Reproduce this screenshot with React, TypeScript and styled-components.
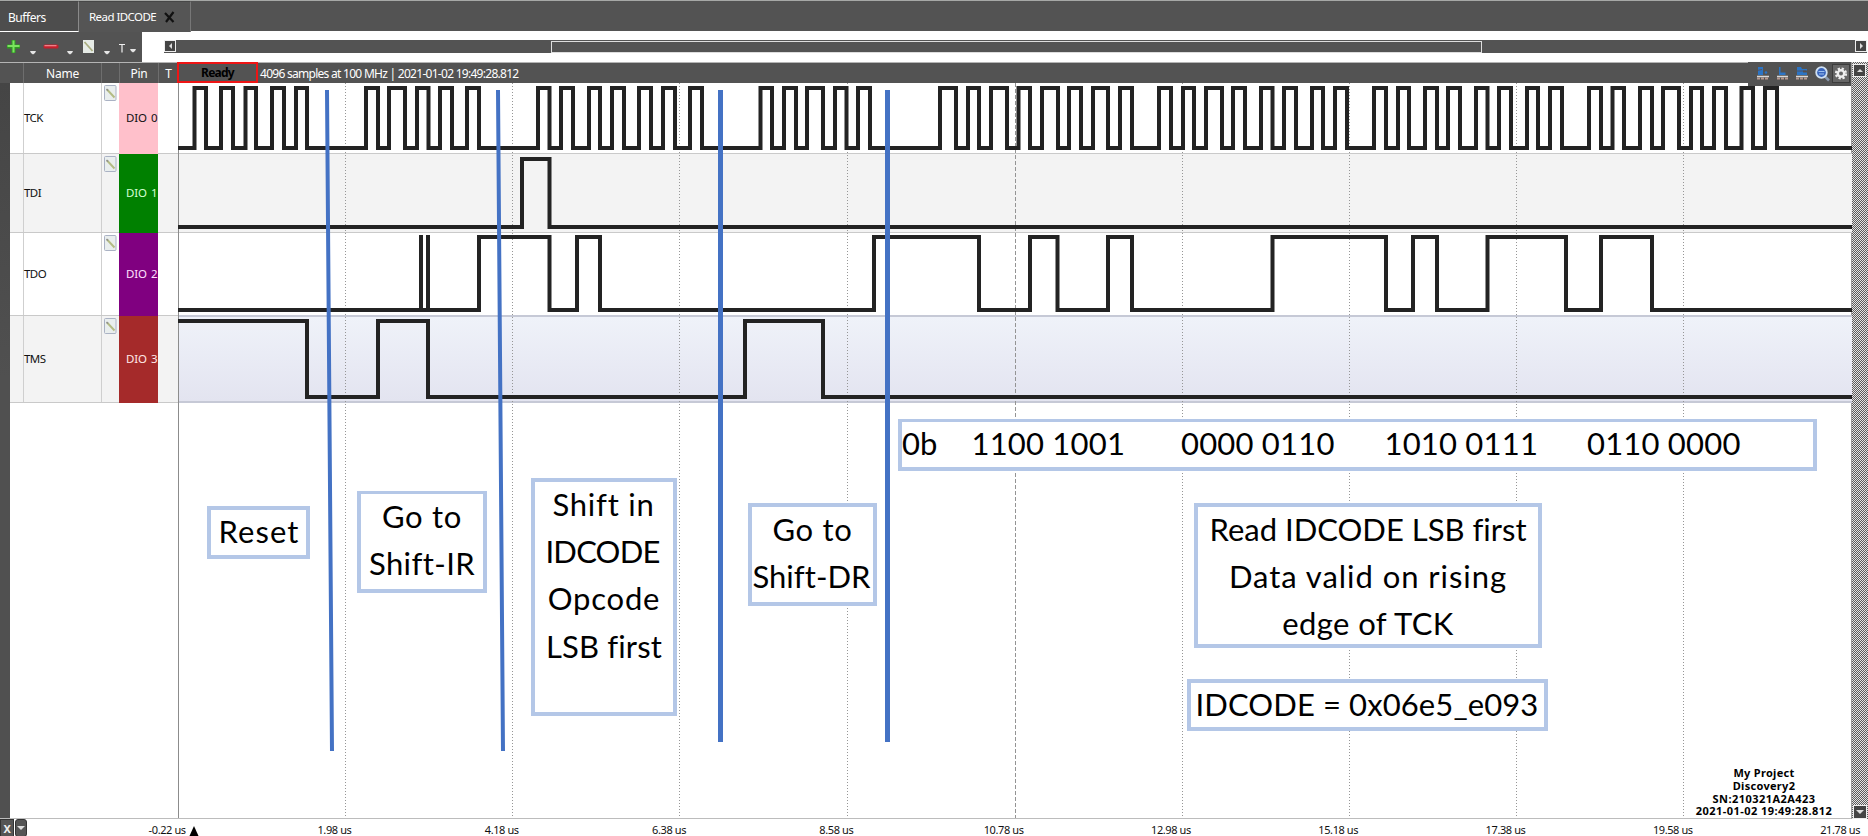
import React from 'react';
import styled, { createGlobalStyle, css } from 'styled-components';

const GlobalStyle = createGlobalStyle`
  * { box-sizing: border-box; }
  body { margin: 0; background: #fff; font-family: 'Noto Sans', sans-serif; overflow: hidden; }
`;

const dark = '#535353';

const Window = styled.div`
  width: 1868px;
  height: 836px;
  display: flex;
  flex-direction: column;
  overflow: hidden;
  background: #fff;
`;

const TabBar = styled.div`
  height: 32px;
  flex: none;
  display: flex;
  background: ${dark};
  border-top: 1px solid #a6a8a6;
  color: #fff;
  font-size: 12px;
`;

const Tab = styled.div<{ $width: number; $active?: boolean }>`
  width: ${p => p.$width}px;
  display: flex;
  align-items: center;
  gap: 8px;
  padding: ${p => (p.$active ? '0 0 1px 10px' : '2px 0 0 8px')};
  font-size: ${p => (p.$active ? '11.5px' : '12px')};
  letter-spacing: ${p => (p.$active ? '-0.55px' : '-0.45px')};
  white-space: nowrap;
  border-right: 1px solid ${p => (p.$active ? '#777' : '#8a8a8a')};
  border-top: 1px solid #474747;
  border-bottom: ${p => (p.$active ? 'none' : '1px solid #fff')};
  background: ${p => (p.$active ? '#555' : '#4d4d4d')};
`;

const TabRest = styled.div`
  flex: 1;
  border-bottom: 1px solid #fff;
`;

const ToolRow = styled.div`
  height: 30px;
  flex: none;
  display: flex;
`;

const Tools = styled.div`
  width: 142px;
  background: ${dark};
  svg { display: block; }
`;

const ScrollArea = styled.div`
  flex: 1;
  padding: 8px 1px 0 22px;
`;

const HTrack = styled.div`
  height: 13px;
  display: flex;
  justify-content: space-between;
  background: ${dark};
`;

const ArrowButton = styled.div<{ $size?: number }>`
  width: ${p => p.$size ?? 12}px;
  height: ${p => p.$size ?? 12}px;
  flex: none;
  border: 1px solid #eee;
  background: #444;
  display: flex;
  align-items: center;
  justify-content: center;
`;

const Arrow = styled.i<{ $dir: 'left' | 'right' | 'up' | 'down' }>`
  width: 0;
  height: 0;
  border: 3px solid transparent;
  ${p => p.$dir === 'left' && css`border-right-color: #ddd; border-left: 0;`}
  ${p => p.$dir === 'right' && css`border-left-color: #ddd; border-right: 0;`}
  ${p => p.$dir === 'up' && css`border-bottom-color: #ddd; border-top: 0;`}
  ${p => p.$dir === 'down' && css`border: 4px solid transparent; border-top-color: #ddd; border-bottom: 0;`}
`;

const HThumb = styled.div`
  width: 931px;
  height: 12px;
  margin: 1px 0 0;
  border: 1px solid #ddd;
  background: ${dark};
`;

const Spacer = styled.div<{ $w: number }>`
  width: ${p => p.$w}px;
  flex: none;
`;

const Body = styled.div`
  height: 757px;
  flex: none;
  display: flex;
`;

const Main = styled.div`
  width: 1852px;
  display: flex;
  flex-direction: column;
  border-bottom: 1px solid #bcbcbc;
`;

const Header = styled.div`
  height: 21px;
  flex: none;
  display: flex;
  background: ${dark};
  border-top: 1px solid #b4b4b4;
  color: #fff;
  font-size: 12px;
  position: relative;
`;

const HeadCell = styled.div<{ $w: number }>`
  width: ${p => p.$w}px;
  flex: none;
  display: flex;
  align-items: center;
  justify-content: center;
  border-right: 1px solid #6e6e6e;
  letter-spacing: -0.2px;
  padding-top: 1px;
`;

const Ready = styled.div`
  width: 81px;
  height: 21px;
  margin: -1px 0 0 -2px;
  border: 2px solid #ee1515;
  color: #000;
  font-weight: 700;
  font-size: 12px;
  letter-spacing: -0.75px;
  display: flex;
  align-items: center;
  justify-content: center;
  position: relative;
`;

const Status = styled.div`
  padding: 1px 0 0 2px;
  display: flex;
  align-items: center;
  letter-spacing: -0.72px;
  white-space: nowrap;
`;

const CornerTools = styled.div`
  position: absolute;
  right: 0;
  top: -1px;
  width: 103px;
  height: 24px;
  background: ${dark};
  z-index: 4;
`;

const Content = styled.div`
  flex: 1;
  display: flex;
`;

const Gutter = styled.div`
  width: 10px;
  background: linear-gradient(#454545, #505050 40%, #505050);
`;

const Channels = styled.div`
  width: 168px;
`;

const rowHeights = [71, 79, 83, 87];

const ChannelRow = styled.div<{ $h: number; $alt?: boolean }>`
  height: ${p => p.$h}px;
  display: flex;
  font-size: 11.5px;
  background: ${p => (p.$alt ? '#f3f3f3' : '#fff')};
  border-bottom: 1px solid #c9c9c9;
`;

const Grip = styled.div`
  width: 14px;
  border-right: 1px solid #cfcfcf;
`;

const NameCell = styled.div`
  width: 78px;
  display: flex;
  align-items: center;
  padding-bottom: 1px;
  letter-spacing: -0.55px;
  color: #111;
  border-right: 1px solid #cfcfcf;
`;

const NoteCell = styled.div`
  width: 17px;
  padding: 2px 0 0 2px;
`;

const PinCell = styled.div<{ $bg: string; $fg: string }>`
  width: 38.5px;
  margin-bottom: -1px;
  background: ${p => p.$bg};
  color: ${p => p.$fg};
  display: flex;
  align-items: center;
  justify-content: space-between;
  padding: 0 0 2px 7px;
  overflow: hidden;
  letter-spacing: -0.1px;
`;

const Plot = styled.div`
  flex: 1;
  position: relative;
  > svg { position: absolute; left: 0; top: 0; display: block; }
`;

const Note = styled.div<{ $x: number; $y: number; $w: number; $h: number; $up?: number; $top?: number }>`
  position: absolute;
  left: ${p => p.$x - 178}px;
  top: ${p => p.$y - 83}px;
  width: ${p => p.$w}px;
  height: ${p => p.$h}px;
  border: 4px solid #b4c7e7;
  border-top-width: ${p => p.$top ?? 4}px;
  background: #fff;
  color: #000;
  font-family: Lato, 'Open Sans', sans-serif;
  font-size: 31px;
  font-variant-ligatures: none;
  line-height: 47.2px;
  display: flex;
  flex-direction: column;
  align-items: center;
  white-space: pre;
  > :first-child { margin-top: ${p => -(p.$up ?? 1)}px; }
`;

const Line = styled.span<{ $ls?: number; $dx?: number }>`
  flex: none;
  letter-spacing: ${p => p.$ls ?? 0}px;
  margin-left: ${p => p.$dx ?? 0}px;
`;

const Bits = styled.div`
  align-self: flex-start;
  display: grid;
  grid-template-columns: 69.5px 209.5px 203.5px 202.5px auto;
`;

const Project = styled.div`
  position: absolute;
  right: 12px;
  bottom: 0;
  width: 150px;
  background: #fff;
  text-align: center;
  white-space: nowrap;
  font-size: 11px;
  font-weight: 700;
  line-height: 12.7px;
  letter-spacing: 0.4px;
`;

const ProjectLine = styled.div<{ $ls?: number }>`
  letter-spacing: ${p => p.$ls ?? 0.3}px;
`;

const VScroll = styled.div`
  flex: 1;
  display: flex;
  flex-direction: column;
  justify-content: space-between;
  border-left: 1px solid #9c9c9c;
  padding: 2px 1px 0 1px;
  background: repeating-conic-gradient(#5c5c5c 0 25%, #e4e4e4 0 50%) 0 0 / 2px 2px;
`;

const Axis = styled.div`
  flex: 1;
  position: relative;
  display: flex;
  font-size: 11px;
  letter-spacing: -0.4px;
  color: #111;
`;

const AxisButtons = styled.div`
  width: 83.5px;
  flex: none;
  display: flex;
  gap: 1px;
  > span {
    width: 14px;
    background: #555;
    border: 1px solid #333;
    color: #eee;
    font-weight: 700;
    font-size: 11px;
    display: flex;
    justify-content: center;
    align-items: center;
  }
  > span + span { width: 12px; border-radius: 3px; }
`;

const Tick = styled.span`
  width: 167.3px;
  flex: none;
  text-align: center;
  padding-top: 3px;
`;

const Marker = styled.i`
  position: absolute;
  left: 189px;
  bottom: 0;
  border: 5px solid transparent;
  border-bottom: 11px solid #000;
  border-top: 0;
`;

const wave = (start: number, startHigh: boolean, hi: number, lo: number, edges: number[]) => {
  let high = startHigh;
  let d = `M${start - 178} ${(high ? hi : lo) - 83}`;
  edges.forEach(x => {
    d += `H${x - 178}`;
    high = !high;
    d += `V${(high ? hi : lo) - 83}`;
  });
  return d + 'H1674';
};

const tck = [
  194.5, 206, 221, 233, 245.5, 256, 272, 284, 296, 307, 366, 378, 389, 405, 417, 428.5, 440, 452, 467, 479,
  538, 549.5, 561, 573, 589, 600, 612, 624, 639, 651, 663, 675, 690, 702, 760.5, 772, 784, 796, 807, 823, 835,
  846.5, 858, 870, 940, 956, 968, 979, 991, 1007, 1018.5, 1030, 1042, 1058, 1069, 1081, 1093, 1108, 1120, 1132,
  1159, 1171, 1183, 1194, 1206, 1222, 1233, 1245, 1261, 1272.5, 1284, 1296, 1312, 1323, 1335, 1347, 1374, 1386,
  1398, 1409, 1425, 1437, 1448, 1460, 1476, 1487.5, 1499, 1511, 1527, 1538, 1550, 1562, 1589, 1601, 1612.5,
  1624, 1640, 1652, 1663, 1679, 1691, 1702, 1714, 1726, 1741.5, 1753, 1765, 1777,
];
const tdi = [522, 549.5];
const tdo = [479, 549.5, 577, 600, 874, 979, 1030, 1057.5, 1108, 1132, 1272.5, 1386, 1413, 1437, 1487.5, 1566, 1601, 1652];
const tms = [307, 378, 428, 745, 823];

const grid = [345.5, 512.5, 679.5, 847.5, 1182.5, 1349.5, 1516.5, 1683.5];

const channels = [
  { name: 'TCK', pin: '0', bg: '#ffc0cb', fg: '#111' },
  { name: 'TDI', pin: '1', bg: '#008000', fg: '#d4ffd4' },
  { name: 'TDO', pin: '2', bg: '#800080', fg: '#ffe0ff' },
  { name: 'TMS', pin: '3', bg: '#a52a2a', fg: '#ffe8e8' },
];

const ticks = ['-0.22 us', '1.98 us', '4.18 us', '6.38 us', '8.58 us', '10.78 us', '12.98 us', '15.18 us', '17.38 us', '19.58 us', '21.78 us'];

const NoteIcon = () => (
  <svg width="13" height="16" viewBox="0 0 13 16">
    <rect x="0.5" y="0.5" width="11.500" height="15" rx="1" fill="#e9eeee" stroke="#aab2c4" />
    <path d="M3 4.500L10.500 12.500" stroke="#b3bb84" strokeWidth="2" />
    <path d="M2.500 4l1.500 1.500" stroke="#8c8c8c" strokeWidth="1.500" />
  </svg>
);

const Toolbar = () => (
  <svg width="142" height="30">
    <path d="M13.5 8v13M7 14.5h13" stroke="#2f9a22" strokeWidth="4" />
    <path d="M13.5 8.5v12M7.500 14h12" stroke="#7be35f" strokeWidth="2" />
    <rect x="43.500" y="12.500" width="15" height="4" rx="1.500" fill="#c41f2c" />
    <rect x="44.500" y="13" width="12" height="1.300" fill="#ee8088" />
    <rect x="83" y="8" width="11" height="13" fill="#e6ebe6" />
    <path d="M84.500 10l8 9" stroke="#a9ad80" strokeWidth="1.800" />
    {[33, 70, 107].map(x => (
      <path key={x} d={`M${x - 3} 19h6l-1 2-2 1.500-2-1.500z`} fill="#e6e6e6" />
    ))}
    <path d="M130 17h6l-1 2-2 1.500-2-1.500z" fill="#e6e6e6" />
    <path d="M119 12.500h6M122 12.500v8" stroke="#f0f0f0" strokeWidth="1.200" />
  </svg>
);

const CornerIcons = () => (
  <svg width="103" height="24">
    <g fill="#2c74c4">
      <path d="M10 5h5v8h-5z" /><circle cx="18" cy="10.500" r="1.300" />
      <path d="M31 5h1.500v5.500h5V13H31z" />
      <path d="M49 5h4l1 2h5v1.500h-4v2h4v2.500H49z" />
    </g>
    <path d="M9 8.500l5-1M49 9h9" stroke="#5b4d4d" strokeWidth=".8" />
    <path d="M9 14.500h12M29 14.500h11M48 14.500h12" stroke="#d8d8d8" strokeWidth="1.500" />
    <path d="M9 16.500h12M29 16.500h11M48 16.500h12" stroke="#b69a90" strokeWidth="2" strokeDasharray="3 1" />
    <path d="M77 14.500l4 4" stroke="#8a9ab0" strokeWidth="2.500" />
    <circle cx="73.500" cy="10.500" r="5.300" fill="#3a66bd" stroke="#cfe0f2" strokeWidth="1.800" />
    <path d="M70.500 9.500h6M71 12h5" stroke="#9cc0f0" />
    <rect x="84.500" y="2.500" width="17" height="18" fill="#666" stroke="#3c3c3c" />
    <circle cx="93" cy="11.500" r="4.800" fill="none" stroke="#eee" strokeWidth="2.600" strokeDasharray="2.200 1.570" />
    <circle cx="93" cy="11.500" r="3.200" fill="#666" stroke="#eee" strokeWidth="2.400" />
  </svg>
);

const Signals = () => (
  <svg width="1674" height="735">
    <defs>
      <linearGradient id="sel" x1="0" y1="0" x2="0" y2="1">
        <stop offset="0" stopColor="#eff2f9" />
        <stop offset="1" stopColor="#e3e4f0" />
      </linearGradient>
    </defs>
    <rect y="71" width="1674" height="78" fill="#f3f3f3" />
    <rect y="234" width="1674" height="84" fill="url(#sel)" />
    <path d="M0 70.500H1674M0 149.500H1674" stroke="#cacaca" />
    <path d="M0 233H1674M0 319H1674" stroke="#c6c9d6" strokeWidth="2" />
    {grid.map(x => (
      <path key={x} d={`M${x - 178} 0V735`} stroke="#969696" strokeDasharray="1 2" />
    ))}
    <path d="M837.500 0V735" stroke="#949494" strokeDasharray="4 2" />
    <path d="M.5 0V735" stroke="#8c8c8c" />
    <g fill="none" stroke="#232323" strokeWidth="4">
      <path d={wave(178, false, 88, 148, tck)} />
      <path d={wave(178, false, 159, 227, tdi)} />
      <path d={wave(178, false, 237, 310, tdo)} />
      <path d="M243 152V227M250 152V227" />
      <path d={wave(178, true, 321, 397, tms)} />
    </g>
    <g stroke="#4472c4" strokeWidth="4">
      <path d="M149 7L154 668M320 7L325 668" />
      <path d="M542.500 7V659M709.500 7V659" strokeWidth="5" />
    </g>
  </svg>
);

export default function App() {
  return (
    <Window>
      <GlobalStyle />
      <TabBar>
        <Tab $width={79}>Buffers</Tab>
        <Tab $width={112} $active>
          Read IDCODE
          <svg width="11" height="12">
            <path d="M1 2l8.500 9M9.500 1L2 11" stroke="#111" strokeWidth="2.200" />
          </svg>
        </Tab>
        <TabRest />
      </TabBar>
      <ToolRow>
        <Tools><Toolbar /></Tools>
        <ScrollArea>
          <HTrack>
            <ArrowButton><Arrow $dir="left" /></ArrowButton>
            <Spacer $w={375} />
            <HThumb />
            <Spacer $w={373} />
            <ArrowButton><Arrow $dir="right" /></ArrowButton>
          </HTrack>
        </ScrollArea>
      </ToolRow>
      <Body>
        <Main>
          <Header>
            <HeadCell $w={24} />
            <HeadCell $w={78}>Name</HeadCell>
            <HeadCell $w={18} />
            <HeadCell $w={39}>Pin</HeadCell>
            <HeadCell $w={20}>T</HeadCell>
            <Ready>Ready</Ready>
            <Status>4096 samples at 100 MHz | 2021-01-02 19:49:28.812</Status>
            <CornerTools><CornerIcons /></CornerTools>
          </Header>
          <Content>
            <Gutter />
            <Channels>
              {channels.map((c, i) => (
                <ChannelRow key={c.name} $h={rowHeights[i]} $alt={i % 2 === 1}>
                  <Grip />
                  <NameCell>{c.name}</NameCell>
                  <NoteCell><NoteIcon /></NoteCell>
                  <PinCell $bg={c.bg} $fg={c.fg}><span>DIO</span><span>{c.pin}</span></PinCell>
                </ChannelRow>
              ))}
            </Channels>
            <Plot>
              <Signals />
              <Note $x={207} $y={506} $w={103} $h={53} $up={2}><Line $ls={1.1} $dx={1}>Reset</Line></Note>
              <Note $x={357} $y={491} $w={130} $h={102} $top={3}><Line $ls={0.7}>Go to</Line><Line $ls={0.4}>Shift-IR</Line></Note>
              <Note $x={531} $y={478} $w={146} $h={238}>
                <Line $ls={0.75} $dx={-1}>Shift in</Line>
                <Line $ls={-0.8} $dx={-3}>IDCODE</Line>
                <Line $ls={0.8}>Opcode</Line>
                <Line $ls={0.15}>LSB first</Line>
              </Note>
              <Note $x={748} $y={503} $w={129} $h={103}><Line $ls={0.7}>Go to</Line><Line $ls={0.05} $dx={-2}>Shift-DR</Line></Note>
              <Note $x={898} $y={419} $w={919} $h={52} $top={3} $up={2}>
                <Bits>
                  <Line>0b</Line><Line $ls={0.2}>1100 1001</Line><Line $ls={0.2}>0000 0110</Line>
                  <Line $ls={0.2}>1010 0111</Line><Line $ls={0.2}>0110 0000</Line>
                </Bits>
              </Note>
              <Note $x={1194} $y={503} $w={348} $h={145}>
                <Line>Read IDCODE LSB first</Line>
                <Line $ls={0.95}>Data valid on rising</Line>
                <Line $ls={0.4}>edge of TCK</Line>
              </Note>
              <Note $x={1187} $y={679} $w={361} $h={52} $up={2}><Line $ls={0.1} $dx={-1}>IDCODE = 0x06e5_e093</Line></Note>
              <Project>
                <ProjectLine>My Project</ProjectLine>
                <ProjectLine>Discovery2</ProjectLine>
                <ProjectLine $ls={0.45}>SN:210321A2A423</ProjectLine>
                <ProjectLine $ls={0.45}>2021-01-02 19:49:28.812</ProjectLine>
              </Project>
            </Plot>
          </Content>
        </Main>
        <VScroll>
          <ArrowButton $size={13}><Arrow $dir="up" /></ArrowButton>
          <ArrowButton $size={14}><Arrow $dir="down" /></ArrowButton>
        </VScroll>
      </Body>
      <Axis>
        <AxisButtons><span>X</span><span><Arrow $dir="down" /></span></AxisButtons>
        {ticks.map(t => <Tick key={t}>{t}</Tick>)}
        <Marker />
      </Axis>
    </Window>
  );
}
